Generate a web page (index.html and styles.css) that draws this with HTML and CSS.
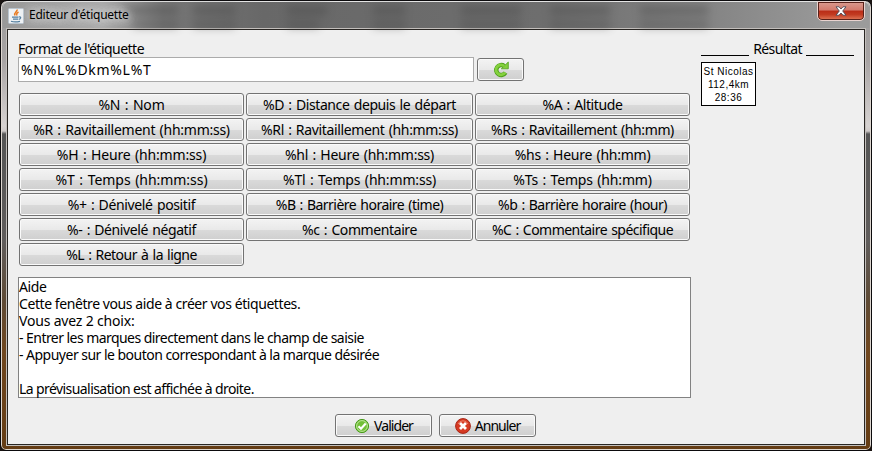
FILE: index.html
```html
<!DOCTYPE html>
<html lang="fr">
<head>
<meta charset="utf-8">
<title>Editeur d'étiquette</title>
<link rel="stylesheet" href="styles.css">
</head>
<body>
<div class="window">
  <header class="titlebar">
    <svg class="ghost" viewBox="0 0 864 26" preserveAspectRatio="none" aria-hidden="true"><g fill="#444"><path d="M120 4h55v9h-55zM190 4h42v9h-42zM284 4h40v9h-40zM370 4h32v9h-32zM458 4h60v9h-60zM547 4h60v9h-60zM637 4h68v9h-68z"/><path d="M130 19h45v7h-45zM190 19h42v7h-42zM284 19h32v7h-32zM370 19h32v7h-32zM458 19h60v7h-60zM547 19h60v7h-60zM637 19h68v7h-68z"/></g></svg>
    <svg class="java" viewBox="0 0 16 16"><rect x=".5" y=".5" width="15" height="15" rx="1" fill="#eef1f4" stroke="#b9c4ce"/><path d="M9 1.500c1 2-3.600 3-2 6M10.500 4c-2.500 1.500-2 2-1.500 3.500" fill="none" stroke="#e8791e" stroke-width="1.500"/><path d="M4 9.200h6.500M5 11.200h5M3 13.300c3 1 6 .8 9 0M11 9c2.500-.5 2 2-.3 2.300" fill="none" stroke="#527d9d" stroke-width="1.200"/></svg>
    <h1>Editeur d'étiquette</h1>
    <button class="close" aria-label="Fermer"><svg viewBox="0 0 12 10"><path d="M1 .8h3L6 3 8 .8h3L7.700 5 11 9.200H8L6 7 4 9.200H1L4.300 5z" fill="#fff" stroke="#4b4755" stroke-width=".9"/></svg></button>
  </header>
  <main class="client">
    <section class="editor">
      <label class="caption" for="format">Format de l'étiquette</label>
      <div class="entry">
        <input id="format" type="text" value="%N%L%Dkm%L%T">
        <button class="btn refresh" aria-label="Actualiser"><svg viewBox="0 0 18 17"><path d="M12.200 5A5 5 0 1 0 13.500 11.700" fill="none" stroke="#4f9e1c" stroke-width="4.400"/><path d="M16.300 1v6.800H9.300z" fill="#84cf3d" stroke="#4f9e1c" stroke-width=".8"/><path d="M12.200 5A5 5 0 1 0 13.200 11.500" fill="none" stroke="#84d13d" stroke-width="2.800"/></svg></button>
      </div>
      <div class="marks">
        <button class="btn t1">%N : Nom</button><button class="btn t4">%D : Distance depuis le départ</button><button class="btn t4">%A : Altitude</button>
        <button class="btn t2">%R : Ravitaillement (hh:mm:ss)</button><button class="btn t3">%Rl : Ravitaillement (hh:mm:ss)</button><button class="btn t4">%Rs : Ravitaillement (hh:mm)</button>
        <button class="btn t1">%H : Heure (hh:mm:ss)</button><button class="btn t2">%hl : Heure (hh:mm:ss)</button><button class="btn t2">%hs : Heure (hh:mm)</button>
        <button class="btn t0">%T : Temps (hh:mm:ss)</button><button class="btn t1">%Tl : Temps (hh:mm:ss)</button><button class="btn t1">%Ts : Temps (hh:mm)</button>
        <button class="btn t3">%+ : Dénivelé positif</button><button class="btn t5">%B : Barrière horaire (time)</button><button class="btn t5">%b : Barrière horaire (hour)</button>
        <button class="btn t4">%- : Dénivelé négatif</button><button class="btn t4">%c : Commentaire</button><button class="btn t5">%C : Commentaire spécifique</button>
        <button class="btn t5">%L : Retour à la ligne</button>
      </div>
      <div class="help">
        <p class="wide">Aide</p>
        <p class="wide">Cette fenêtre vous aide à créer vos étiquettes.</p>
        <p class="wider">Vous avez 2 choix:</p>
        <p>- Entrer les marques directement dans le champ de saisie</p>
        <p class="last">- Appuyer sur le bouton correspondant à la marque désirée</p>
        <p>&nbsp;</p>
        <p class="last">La prévisualisation est affichée à droite.</p>
      </div>
    </section>
    <aside class="result">
      <div class="heading"><i></i><span>Résultat</span><i></i></div>
      <div class="tag"><span>St Nicolas</span><span>112,4km</span><span>28:36</span></div>
    </aside>
    <footer class="actions">
      <button class="btn"><svg viewBox="0 0 16 16"><circle cx="8" cy="8" r="6.600" fill="#72bf38" stroke="#489b1c"/><circle cx="8" cy="8" r="5.400" fill="none" stroke="#c4e9a5" stroke-width=".9"/><path d="M4.500 8.300 7 10.700 11.700 5.600" fill="none" stroke="#fff" stroke-width="2.200"/></svg>Valider</button>
      <button class="btn"><svg viewBox="0 0 16 16"><circle cx="8" cy="8" r="7.400" fill="#d63a22" stroke="#a82618"/><path d="M3 6a5.500 5.500 0 0 1 10 0" fill="none" stroke="#ed8068"/><path d="M5 5l6 6M11 5l-6 6" stroke="#fff" stroke-width="2.800"/></svg>Annuler</button>
    </footer>
  </main>
</div>
</body>
</html>
```
FILE: styles.css
```css
* { box-sizing: border-box; }
body { margin: 0; background: #1a1412; font-family: "Noto Sans", sans-serif; font-size: 14px; color: #000; overflow: hidden; }
.window {
  width: 872px; height: 451px; padding: 0 6px 5px 5px; position: relative;
  border: 1px solid #0b0a0c; border-radius: 7px 7px 6px 6px;
  box-shadow: inset 0 0 0 1px #ddd6d0;
  background: linear-gradient(#9a9a9a 0, #a8a4a4 60px, #d6d2d1 125px, #cfcac9 130px, #555 133px, #605d5c 240px, #5e4a35 300px, #70471f 350px, #643c14 100%);
}
.titlebar {
  height: 27px; margin: 0 -4px 0 -3px; padding: 0 3px 0 5px; display: flex; align-items: center; position: relative;
  border-top: 1px solid #e4e4e4; border-radius: 6px 6px 0 0;
  background: linear-gradient(90deg, #999 0, #aaa 100px, #777 160px, #686868 260px, #6e6e6e 540px, #838383 700px, #9b9b9b 840px);
}
.ghost { position: absolute; left: 0; top: 0; width: 864px; height: 26px; filter: blur(4px); opacity: .4; }
.java { width: 16px; height: 16px; margin-top: 1px; position: relative; }
h1 { margin: 0 0 0 5px; font-size: 12px; font-weight: 400; line-height: 20px; letter-spacing: -.25px; position: relative; text-shadow: 0 0 8px #ddd, 0 0 8px #ddd, 0 0 12px #ccc; }
.close {
  position: absolute; right: 4px; top: -1px; width: 48px; height: 20px; padding: 0;
  display: flex; align-items: center; justify-content: center;
  border: 1px solid #e9d3cf; border-radius: 0 0 5px 5px; box-shadow: inset 0 0 0 1px #58211a;
  background: linear-gradient(#d99b90 0, #d2796b 45%, #ba2c17 50%, #c23b21 70%, #e17c5c 100%);
}
.close svg { width: 12px; height: 10px; }
.client {
  height: 416px; padding: 10px 8px 0 10px; border: 1px solid #282522; outline: 1px solid #c3bfbc;
  margin-top: 1px; margin-left: 1px; background: #efefef; display: grid; grid-template-columns: 673px 153px; column-gap: 10px; align-content: start;
}
.caption { display: block; height: 17px; line-height: 17px; letter-spacing: -.52px; }
.entry { display: flex; gap: 3px; align-items: center; }
input { width: 456px; height: 25px; border: 1px solid #ababab; padding: 0 2px; font: inherit; letter-spacing: .7px; background: #fff; }
.btn {
  height: 23px; padding: 0; display: flex; align-items: center; justify-content: center;
  border: 1px solid #737373; border-radius: 3px; box-shadow: inset 0 0 0 1px #fafafa;
  background: linear-gradient(#f3f3f3 0, #e9e9e9 50%, #dadada 51%, #cfcfcf 100%);
  font: inherit; color: #000; white-space: nowrap; line-height: 20px; word-spacing: 1px;
}
.t0 { letter-spacing: -.04px; }
.t1 { letter-spacing: -.16px; }
.t2 { letter-spacing: -.26px; }
.t3 { letter-spacing: -.36px; }
.t4 { letter-spacing: -.4px; }
.t5 { letter-spacing: -.52px; }
.refresh { width: 47px; }
.refresh svg { width: 18px; height: 17px; }
.marks { display: grid; grid-template-columns: 225px 227px 215px; gap: 2px; margin: 11px 0 0 1px; }
.help { height: 121px; margin-top: 11px; border: 1px solid #828282; background: #fff; }
p { margin: 0; line-height: 17px; white-space: nowrap; letter-spacing: -.55px; }
p.wide { letter-spacing: -.42px; }
p.wider { letter-spacing: -.18px; }
p.last { letter-spacing: -.5px; word-spacing: -.1px; }
p.last:last-child { letter-spacing: -.57px; }
.heading { display: flex; justify-content: space-between; height: 17px; line-height: 17px; letter-spacing: -.6px; }
.heading i { width: 48px; height: 1px; background: #000; margin-top: 15px; }
.tag { width: 55px; height: 44px; margin-top: 5px; border: 1px solid #000; background: #fff; display: flex; flex-direction: column; align-items: center; padding-top: 2px; font: 10px/13px "Liberation Sans", sans-serif; letter-spacing: .5px; white-space: nowrap; }
.actions { grid-column: 1 / -1; display: flex; gap: 7px; margin: 16px 0 0 317px; }
.actions .btn { width: 97px; gap: 4px; letter-spacing: -.95px; }
.actions svg { width: 16px; height: 16px; }
```
